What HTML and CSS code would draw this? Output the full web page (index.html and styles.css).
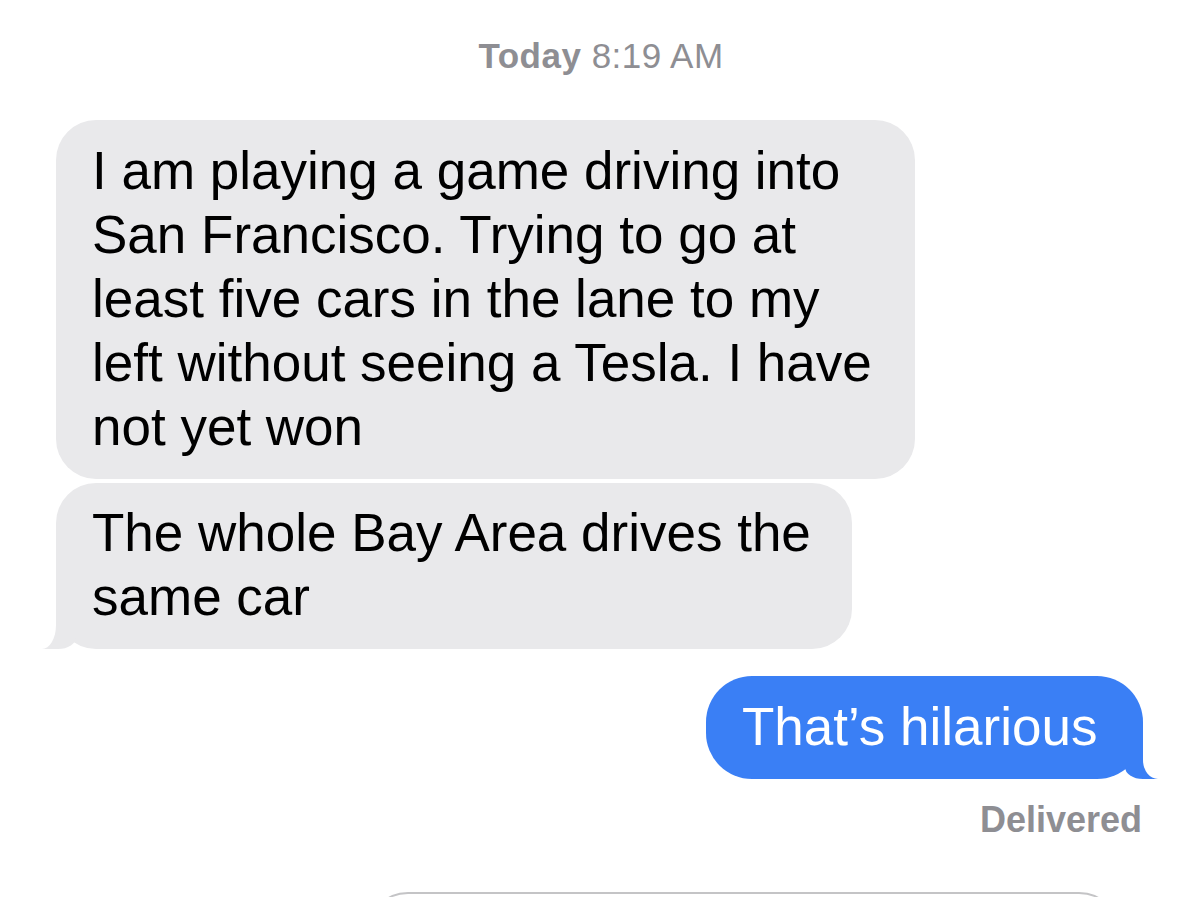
FILE: index.html
```html
<!DOCTYPE html>
<html lang="en">
<head>
    <meta charset="UTF-8">
    <meta name="viewport" content="width=device-width, initial-scale=1.0">
    <title>Messages</title>
    <link rel="stylesheet" href="styles.css">
</head>
<body>
    <div class="thread">
        <div class="timestamp"><span class="day">Today</span> 8:19 AM</div>

        <div class="bubble them first">
            I am playing a game driving into<br>
            San Francisco. Trying to go at<br>
            least five cars in the lane to my<br>
            left without seeing a Tesla. I have<br>
            not yet won
        </div>
        <div class="bubble them last tail">
            The whole Bay Area drives the<br>
            same car
        </div>

        <div class="bubble me tail">That&rsquo;s hilarious</div>
        <div class="status">Delivered</div>

        <!-- compose field, cut off by the bottom of the screen -->
        <div class="compose"></div>
    </div>
</body>
</html>
```

FILE: styles.css
```css
body {
    margin: 0;
    background-color: #fff;
    font-family: "Liberation Sans", Helvetica, Arial, sans-serif;
    overflow: hidden;
}
.thread {
    display: flex;
    flex-direction: column;
    padding-top: 36px;
}
.timestamp {
    text-align: center;
    font-size: 35px;
    line-height: 40px;
    letter-spacing: 0.5px;
    color: #8e8e93;
    padding-left: 2px;
}
.timestamp .day {
    font-weight: bold;
}
.bubble {
    position: relative;
    box-sizing: border-box;
    font-size: 53px;
    line-height: 64px;
    white-space: nowrap;
    padding: 19px 36px 20px;
    border-radius: 40px;
}
.them {
    align-self: flex-start;
    margin-left: 56px;
    background-color: #e9e9eb;
    color: #000;
}
.them.first {
    width: 859px;
    margin-top: 44px;
}
.them.last {
    width: 796px;
    margin-top: 4px;
    padding-top: 18px;
}
.me {
    align-self: flex-end;
    width: 437px;
    margin-top: 27px;
    margin-right: 57px;
    padding: 19px 36px 20px;
    border-radius: 46px;
    background-color: #3a7ff5;
    color: #fff;
}

/* bubble tails */
.tail::before,
.tail::after {
    content: "";
    position: absolute;
    bottom: 0;
}
.them.tail::before {
    left: -14px;
    width: 34px;
    height: 40px;
    background-color: #e9e9eb;
    border-bottom-right-radius: 18px 12px;
}
.them.tail::after {
    left: -30px;
    width: 30px;
    height: 40px;
    background-color: #fff;
    border-bottom-right-radius: 14px 24px;
}
.me.tail::before {
    right: -15px;
    width: 33px;
    height: 46px;
    background-color: #3a7ff5;
    border-bottom-left-radius: 18px 12px;
}
.me.tail::after {
    right: -30px;
    width: 30px;
    height: 46px;
    background-color: #fff;
    border-bottom-left-radius: 15px 19px;
}

.status {
    align-self: flex-end;
    margin-top: 21px;
    margin-right: 58px;
    font-size: 36px;
    line-height: 40px;
    font-weight: bold;
    color: #8e8e93;
}
.compose {
    margin: 52px 79px 0 366px;
    height: 80px;
    border: 2px solid #c4c4c6;
    border-radius: 60px;
}
```
